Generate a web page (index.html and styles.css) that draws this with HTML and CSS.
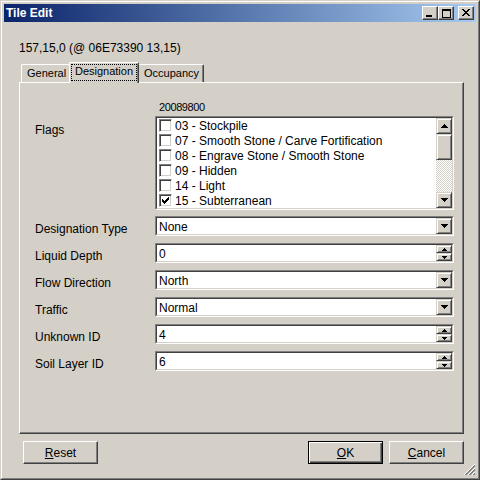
FILE: index.html
```html
<!DOCTYPE html>
<html>
<head>
<meta charset="utf-8">
<link rel="stylesheet" href="styles.css">
</head>
<body>
<div class="window">
  <div class="frame">
    <div class="titlebar">
      <span class="title">Tile Edit</span>
      <span class="tbtn tmin"><svg width="6" height="2"><path d="M0 0h6v2H0z"/></svg></span>
      <span class="tbtn tmax"><svg width="9" height="9"><path fill-rule="evenodd" d="M0 0h9v9H0zM1 2h7v6H1z"/></svg></span>
      <span class="tbtn tclose"><svg width="8" height="7"><path d="M0 0h2v1H0zM6 0h2v1H6zM1 1h2v1H1zM5 1h2v1H5zM2 2h4v1H2zM3 3h2v1H3zM2 4h4v1H2zM1 5h2v1H1zM5 5h2v1H5zM0 6h2v1H0zM6 6h2v1H6z"/></svg></span>
    </div>
    <div class="client">
      <div class="info">157,15,0 (@ 06E73390 13,15)</div>
      <div class="tabs">
        <div class="tab tab-first">General</div>
        <div class="tab tab-sel"><span class="focus">Designation</span></div>
        <div class="tab tab-last">Occupancy</div>
      </div>
      <div class="panel">
        <div class="hdr">20089800</div>
        <div class="form">
          <div class="lbl lbl-flags">Flags</div>
          <div class="list">
            <div class="list-in">
              <div class="items">
                <div class="item"><span class="cb"></span><span class="itxt">03 - Stockpile</span></div>
                <div class="item"><span class="cb"></span><span class="itxt">07 - Smooth Stone / Carve Fortification</span></div>
                <div class="item"><span class="cb"></span><span class="itxt">08 - Engrave Stone / Smooth Stone</span></div>
                <div class="item"><span class="cb"></span><span class="itxt">09 - Hidden</span></div>
                <div class="item"><span class="cb"></span><span class="itxt">14 - Light</span></div>
                <div class="item"><span class="cb"><svg width="7" height="7"><path d="M6 0h1v1H6zM5 1h2v1H5zM0 2h1v1H0zM4 2h3v1H4zM0 3h2v1H0zM3 3h3v1H3zM0 4h5v1H0zM1 5h3v1H1zM2 6h1v1H2z"/></svg></span><span class="itxt">15 - Subterranean</span></div>
              </div>
              <div class="vscroll">
                <div class="raised sbtn"><svg width="7" height="4"><path d="M3 0h1v1H3zM2 1h3v1H2zM1 2h5v1H1zM0 3h7v1H0z"/></svg></div>
                <div class="raised thumb"></div>
                <div class="track"></div>
                <div class="raised sbtn"><svg width="7" height="4"><path d="M0 0h7v1H0zM1 1h5v1H1zM2 2h3v1H2zM3 3h1v1H3z"/></svg></div>
              </div>
            </div>
          </div>

          <div class="lbl">Designation Type</div>
          <div class="ctl"><div class="ctl-in"><span class="val">None</span><span class="raised ddbtn"><svg width="7" height="4"><path d="M0 0h7v1H0zM1 1h5v1H1zM2 2h3v1H2zM3 3h1v1H3z"/></svg></span></div></div>

          <div class="lbl">Liquid Depth</div>
          <div class="ctl"><div class="ctl-in"><span class="val">0</span><span class="spin"><span class="raised spbtn"><svg width="5" height="3"><path d="M2 0h1v1H2zM1 1h3v1H1zM0 2h5v1H0z"/></svg></span><span class="raised spbtn"><svg width="5" height="3"><path d="M0 0h5v1H0zM1 1h3v1H1zM2 2h1v1H2z"/></svg></span></span></div></div>

          <div class="lbl">Flow Direction</div>
          <div class="ctl"><div class="ctl-in"><span class="val">North</span><span class="raised ddbtn"><svg width="7" height="4"><path d="M0 0h7v1H0zM1 1h5v1H1zM2 2h3v1H2zM3 3h1v1H3z"/></svg></span></div></div>

          <div class="lbl">Traffic</div>
          <div class="ctl"><div class="ctl-in"><span class="val">Normal</span><span class="raised ddbtn"><svg width="7" height="4"><path d="M0 0h7v1H0zM1 1h5v1H1zM2 2h3v1H2zM3 3h1v1H3z"/></svg></span></div></div>

          <div class="lbl">Unknown ID</div>
          <div class="ctl"><div class="ctl-in"><span class="val">4</span><span class="spin"><span class="raised spbtn"><svg width="5" height="3"><path d="M2 0h1v1H2zM1 1h3v1H1zM0 2h5v1H0z"/></svg></span><span class="raised spbtn"><svg width="5" height="3"><path d="M0 0h5v1H0zM1 1h3v1H1zM2 2h1v1H2z"/></svg></span></span></div></div>

          <div class="lbl">Soil Layer ID</div>
          <div class="ctl"><div class="ctl-in"><span class="val">6</span><span class="spin"><span class="raised spbtn"><svg width="5" height="3"><path d="M2 0h1v1H2zM1 1h3v1H1zM0 2h5v1H0z"/></svg></span><span class="raised spbtn"><svg width="5" height="3"><path d="M0 0h5v1H0zM1 1h3v1H1zM2 2h1v1H2z"/></svg></span></span></div></div>
        </div>
      </div>
      <div class="btnrow">
        <div class="btn btn-reset"><u>R</u>eset</div>
        <div class="spacer"></div>
        <div class="btn btn-default"><u>O</u>K</div>
        <div class="btn"><u>C</u>ancel</div>
      </div>
      <div class="griprow">
        <svg width="12" height="12" shape-rendering="crispEdges">
          <path d="M11 0L0 11M11 4L4 11M11 8L8 11" stroke="#fff" fill="none"/>
          <path d="M11 1L1 11M11 2L2 11M11 5L5 11M11 6L6 11M11 9L9 11M11 10L10 11" stroke="#808080" fill="none"/>
        </svg>
      </div>
    </div>
  </div>
</div>
</body>
</html>
```
FILE: styles.css
```css
* { box-sizing: border-box; }
html, body { margin: 0; padding: 0; }
body {
  width: 480px;
  height: 480px;
  background: #d4d0c8;
  font-family: "Liberation Sans", Arial, sans-serif;
  font-size: 12px;
  color: #000;
  overflow: hidden;
}
svg { display: block; }
.window {
  width: 480px;
  height: 480px;
  border: 1px solid;
  border-color: #d4d0c8 #404040 #404040 #d4d0c8;
  background: #d4d0c8;
}
.frame {
  height: 100%;
  border: 1px solid;
  border-color: #fff #808080 #808080 #fff;
  padding: 2px;
  display: flex;
  flex-direction: column;
}
.titlebar {
  height: 18px;
  flex: none;
  background: linear-gradient(to right, #0a246a, #a6caf0);
  display: flex;
  align-items: center;
  padding: 0 2px;
}
.title {
  flex: 1;
  color: #fff;
  font-weight: bold;
  font-size: 12px;
  line-height: 14px;
}
.raised {
  background: #d4d0c8;
  border: 1px solid;
  border-color: #d4d0c8 #404040 #404040 #d4d0c8;
  box-shadow: inset 1px 1px #fff, inset -1px -1px #808080;
}
.tbtn {
  width: 16px;
  height: 14px;
  background: #d4d0c8;
  border: 1px solid;
  border-color: #fff #404040 #404040 #fff;
  box-shadow: inset -1px -1px #808080;
  display: flex;
  align-items: center;
  justify-content: center;
}
.tmin { align-items: flex-end; justify-content: flex-start; padding: 0 0 2px 3px; }
.tmax { padding-left: 1px; }
.tclose { margin-left: 4px; padding-bottom: 1px; }

.client {
  flex: 1;
  padding: 19px 12px 0 15px;
  display: flex;
  flex-direction: column;
}
.info { line-height: 14px; height: 14px; }

.tabs {
  margin-top: 7px;
  height: 20px;
  display: flex;
  align-items: flex-end;
  padding-left: 2px;
  font-size: 11px;
}
.tab {
  height: 18px;
  line-height: 16px;
  border-top: 1px solid #fff;
  background: #d4d0c8;
}
.tab-first {
  width: 48px;
  border-left: 1px solid #fff;
  border-top-left-radius: 2px;
  padding-left: 5px;
}
.tab-sel {
  width: 70px;
  height: 21px;
  margin-bottom: -1px;
  z-index: 2;
  border-left: 1px solid #fff;
  border-right: 1px solid #404040;
  border-radius: 2px 2px 0 0;
  box-shadow: inset -1px 0 #808080;
  padding: 1px 0 0 1px;
}
.focus {
  display: block;
  width: 66px;
  height: 17px;
  border: 1px dotted #000;
  line-height: 13px;
  text-align: center;
}
.tab-last {
  width: 65px;
  border-right: 1px solid #404040;
  border-top-right-radius: 2px;
  box-shadow: inset -1px 0 #808080;
  padding-left: 5px;
}

.panel {
  height: 352px;
  flex: none;
  border: 1px solid;
  border-color: #fff #404040 #404040 #fff;
  box-shadow: inset -1px -1px #808080;
  padding: 18px 0 0 15px;
}
.hdr {
  margin-left: 124px;
  font-size: 11px;
  line-height: 13px;
  letter-spacing: -0.4px;
  margin-bottom: 2px;
}
.form {
  display: grid;
  grid-template-columns: 120px 299px;
  row-gap: 7px;
}
.lbl { padding-top: 6px; line-height: 14px; }
.lbl-flags { padding-top: 7px; }

.list {
  height: 94px;
  margin-bottom: -1px;
  border: 1px solid;
  border-color: #808080 #fff #fff #808080;
  display: flex;
}
.list-in {
  flex: 1;
  display: flex;
  background: #fff;
  border: 1px solid;
  border-color: #404040 #d4d0c8 #d4d0c8 #404040;
}
.items { flex: 1; overflow: hidden; }
.item {
  height: 15px;
  display: flex;
  align-items: flex-start;
  white-space: nowrap;
  line-height: 15px;
}
.cb {
  width: 13px;
  height: 13px;
  margin: 1px 0 0 2px;
  flex: none;
  background: #fff;
  border: 1px solid;
  border-color: #808080 #fff #fff #808080;
  box-shadow: inset 1px 1px #404040, inset -1px -1px #d4d0c8;
  padding: 2px;
}
.itxt { margin-left: 3px; padding-top: 1px; }
.vscroll {
  width: 16px;
  flex: none;
  display: flex;
  flex-direction: column;
}
.sbtn {
  height: 16px;
  display: flex;
  align-items: center;
  justify-content: center;
}
.thumb { height: 26px; }
.track {
  flex: 1;
  background-image: conic-gradient(#fff 25%, #d4d0c8 0 50%, #fff 0 75%, #d4d0c8 0);
  background-size: 2px 2px;
}

.ctl {
  height: 20px;
  border: 1px solid;
  border-color: #808080 #fff #fff #808080;
  display: flex;
}
.ctl-in {
  flex: 1;
  display: flex;
  background: #fff;
  border: 1px solid;
  border-color: #404040 #d4d0c8 #d4d0c8 #404040;
}
.val {
  flex: 1;
  padding: 2px 0 0 2px;
  line-height: 14px;
}
.ddbtn {
  width: 16px;
  height: 16px;
  display: flex;
  align-items: center;
  justify-content: center;
}
.spin {
  width: 16px;
  display: flex;
  flex-direction: column;
}
.spbtn {
  height: 8px;
  display: flex;
  align-items: center;
  justify-content: center;
}

.btnrow {
  margin-top: 7px;
  height: 23px;
  flex: none;
  display: flex;
  gap: 6px;
}
.spacer { flex: 1; }
.btn {
  width: 75px;
  height: 23px;
  border: 1px solid;
  border-color: #fff #404040 #404040 #fff;
  box-shadow: inset -1px -1px #808080;
  text-align: center;
  line-height: 22px;
}
.btn-reset { margin-left: 4px; }
.btn-default {
  border-color: #000;
  box-shadow: inset 1px 1px #fff, inset -1px -1px #404040, inset -2px -2px #808080;
}
.griprow {
  height: 12px;
  flex: none;
  display: flex;
  justify-content: flex-end;
  margin-right: -12px;
}
```
